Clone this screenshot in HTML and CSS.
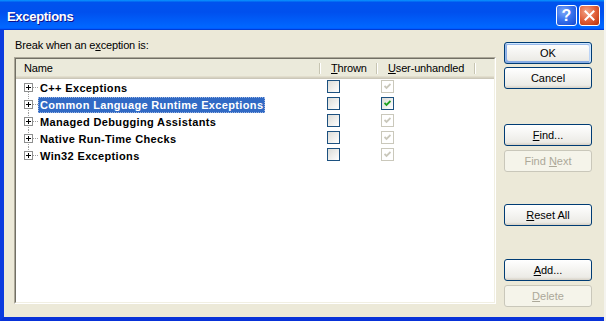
FILE: index.html
```html
<!DOCTYPE html>
<html lang="en">
<head>
    <meta charset="UTF-8">
    <title>Exceptions</title>
    <link rel="stylesheet" href="styles.css">
</head>
<body>
    <div class="window">
        <div class="titlebar">
            <span class="title">Exceptions</span>
            <button class="ctl help">?</button>
            <button class="ctl close">
                <svg width="11" height="11" viewBox="0 0 11 11"><path d="M1.5 1.5 L9.5 9.5 M9.5 1.5 L1.5 9.5" stroke="#fff" stroke-width="2" stroke-linecap="square"/></svg>
            </button>
        </div>

        <div class="client">
            <div class="main">
                <div class="prompt">Break when an e<u>x</u>ception is:</div>
                <div class="listbox">
                    <div class="listbox-in">
                        <div class="header">
                            <div class="hcol hname">Name</div>
                            <div class="hcol hthrown"><u>T</u>hrown</div>
                            <div class="hcol huser"><u>U</u>ser-unhandled</div>
                            <div class="hrest"></div>
                        </div>

                        <div class="rows">
                            <div class="row">
                                <div class="cell-name">
                                    <svg class="expander" width="9" height="9" viewBox="0 0 9 9"><rect x="0.5" y="0.5" width="8" height="8" fill="#fff" stroke="#8E8F8F"/><path d="M2 4.5 H7 M4.5 2 V7" stroke="#000"/></svg>
                                    <span class="branch"></span>
                                    <span class="label">C++ Exceptions</span>
                                </div>
                                <div class="cell-thrown"><span class="cb"></span></div>
                                <div class="cell-user"><span class="cb disabled"><svg width="7" height="7" viewBox="0 0 7 7"><path d="M0.5 3 L2.5 5 L6.5 1" stroke="#CAC8BB" stroke-width="1.8" fill="none"/></svg></span></div>
                            </div>
                            <div class="row selected">
                                <div class="cell-name">
                                    <svg class="expander" width="9" height="9" viewBox="0 0 9 9"><rect x="0.5" y="0.5" width="8" height="8" fill="#fff" stroke="#8E8F8F"/><path d="M2 4.5 H7 M4.5 2 V7" stroke="#000"/></svg>
                                    <span class="branch"></span>
                                    <span class="label">Common Language Runtime Exceptions</span>
                                </div>
                                <div class="cell-thrown"><span class="cb"></span></div>
                                <div class="cell-user"><span class="cb"><svg width="7" height="7" viewBox="0 0 7 7"><path d="M0.5 3 L2.5 5 L6.5 1" stroke="#21A121" stroke-width="1.8" fill="none"/></svg></span></div>
                            </div>
                            <div class="row">
                                <div class="cell-name">
                                    <svg class="expander" width="9" height="9" viewBox="0 0 9 9"><rect x="0.5" y="0.5" width="8" height="8" fill="#fff" stroke="#8E8F8F"/><path d="M2 4.5 H7 M4.5 2 V7" stroke="#000"/></svg>
                                    <span class="branch"></span>
                                    <span class="label">Managed Debugging Assistants</span>
                                </div>
                                <div class="cell-thrown"><span class="cb"></span></div>
                                <div class="cell-user"><span class="cb disabled"><svg width="7" height="7" viewBox="0 0 7 7"><path d="M0.5 3 L2.5 5 L6.5 1" stroke="#CAC8BB" stroke-width="1.8" fill="none"/></svg></span></div>
                            </div>
                            <div class="row">
                                <div class="cell-name">
                                    <svg class="expander" width="9" height="9" viewBox="0 0 9 9"><rect x="0.5" y="0.5" width="8" height="8" fill="#fff" stroke="#8E8F8F"/><path d="M2 4.5 H7 M4.5 2 V7" stroke="#000"/></svg>
                                    <span class="branch"></span>
                                    <span class="label">Native Run-Time Checks</span>
                                </div>
                                <div class="cell-thrown"><span class="cb"></span></div>
                                <div class="cell-user"><span class="cb disabled"><svg width="7" height="7" viewBox="0 0 7 7"><path d="M0.5 3 L2.5 5 L6.5 1" stroke="#CAC8BB" stroke-width="1.8" fill="none"/></svg></span></div>
                            </div>
                            <div class="row">
                                <div class="cell-name">
                                    <svg class="expander" width="9" height="9" viewBox="0 0 9 9"><rect x="0.5" y="0.5" width="8" height="8" fill="#fff" stroke="#8E8F8F"/><path d="M2 4.5 H7 M4.5 2 V7" stroke="#000"/></svg>
                                    <span class="branch"></span>
                                    <span class="label">Win32 Exceptions</span>
                                </div>
                                <div class="cell-thrown"><span class="cb"></span></div>
                                <div class="cell-user"><span class="cb disabled"><svg width="7" height="7" viewBox="0 0 7 7"><path d="M0.5 3 L2.5 5 L6.5 1" stroke="#CAC8BB" stroke-width="1.8" fill="none"/></svg></span></div>
                            </div>
                        </div>
                    </div>
                </div>
            </div>

            <div class="buttons">
                <button class="btn default">OK</button>
                <button class="btn">Cancel</button>
                <button class="btn find"><u>F</u>ind...</button>
                <button class="btn pair" disabled>Find <u>N</u>ext</button>
                <button class="btn reset"><u>R</u>eset All</button>
                <button class="btn add"><u>A</u>dd...</button>
                <button class="btn pair" disabled><u>D</u>elete</button>
            </div>
        </div>
    </div>
</body>
</html>
```

FILE: styles.css
```css
html, body {
    margin: 0;
    padding: 0;
}
body {
    width: 606px;
    height: 321px;
    overflow: hidden;
    background: #F4F3EE;
    font-family: "Liberation Sans", Arial, sans-serif;
    font-size: 11px;
    color: #000;
}
.window {
    width: 604px;
    height: 321px;
    display: flex;
    flex-direction: column;
}

/* title bar */
.titlebar {
    height: 30px;
    flex: none;
    display: flex;
    align-items: center;
    box-sizing: border-box;
    padding: 0 4px 0 7px;
    background: linear-gradient(180deg, #0997FF, #0053EE 8%, #0050EE 40%, #0066FF 88%, #0066FF 93%, #005BFF 95%, #003DD7 96%, #003DD7);
}
.title {
    flex: 1;
    color: #fff;
    font-weight: bold;
    font-size: 13px;
    letter-spacing: -0.3px;
    text-shadow: 1px 1px #0F1089;
    padding-top: 2px;
}
.ctl {
    width: 21px;
    height: 21px;
    box-sizing: border-box;
    border: 1px solid #fff;
    border-radius: 3px;
    padding: 0;
    display: flex;
    align-items: center;
    justify-content: center;
    color: #fff;
    font-family: "Liberation Sans", Arial, sans-serif;
    font-weight: bold;
    font-size: 16px;
    line-height: 19px;
}
.ctl + .ctl {
    margin-left: 2px;
}
.help {
    background: radial-gradient(circle at 35% 30%, #7DA8F8, #3A74EE 45%, #1A4FD6 90%);
}
.close {
    background: radial-gradient(circle at 35% 30%, #F2A486, #E1603A 50%, #C2380E 90%);
}

/* dialog body */
.client {
    flex: 1;
    display: flex;
    background: #ECE9D8;
    border-left: 4px solid #0B3BDF;
    border-bottom: 4px solid #0832D8;
    padding: 9px 0 0 10px;
}
.main {
    width: 482px;
}
.prompt {
    height: 13px;
    line-height: 13px;
    margin-bottom: 5px;
    padding-left: 1px;
    letter-spacing: -0.15px;
}
.listbox {
    height: 247px;
    box-sizing: border-box;
    border: 1px solid;
    border-color: #ACA899 #fff #fff #ACA899;
}
.listbox-in {
    height: 100%;
    box-sizing: border-box;
    border: 1px solid;
    border-color: #716F64 #F1EFE2 #F1EFE2 #716F64;
    background: #fff;
}

/* column header */
.header {
    display: flex;
    height: 20px;
    box-sizing: border-box;
    background: #EBEADB;
    box-shadow: inset 0 -1px #CBC7B8, inset 0 -2px #D6D2C2, inset 0 -3px #E2DECD;
}
.hcol {
    position: relative;
    box-sizing: border-box;
    line-height: 19px;
    letter-spacing: -0.15px;
    white-space: nowrap;
}
.hcol::after {
    content: "";
    position: absolute;
    right: 1px;
    top: 4px;
    bottom: 5px;
    width: 1px;
    background: #C7C5B2;
    box-shadow: 1px 0 #fff;
}
.hname {
    width: 305px;
    padding-left: 8px;
}
.hthrown {
    width: 57px;
    padding-left: 10px;
}
.huser {
    width: 98px;
    padding-left: 10px;
}
.hrest {
    flex: 1;
}

/* tree rows */
.row {
    display: flex;
    height: 17px;
}
.cell-name {
    position: relative;
    width: 305px;
    box-sizing: border-box;
    padding-left: 8px;
    display: flex;
    align-items: center;
}
.cell-name::before {
    content: "";
    position: absolute;
    left: 12px;
    top: 0;
    bottom: 0;
    width: 1px;
    background: repeating-linear-gradient(180deg, #A0A0A0 0 1px, transparent 1px 2px);
}
.row:first-child .cell-name::before {
    top: 9px;
}
.row:last-child .cell-name::before {
    bottom: 9px;
}
.expander {
    position: relative;
    flex: none;
    display: block;
}
.branch {
    width: 5px;
    height: 1px;
    flex: none;
    background: repeating-linear-gradient(90deg, #A0A0A0 0 1px, transparent 1px 2px);
}
.label {
    padding: 0 1px;
    border: 1px dotted transparent;
    line-height: 14px;
    font-weight: bold;
    letter-spacing: 0.35px;
    white-space: nowrap;
}
.selected .label {
    background: #316AC5;
    color: #fff;
    border-color: #9DB6E2;
}
.cell-thrown {
    width: 57px;
    box-sizing: border-box;
    padding: 1px 0 0 6px;
}
.cell-user {
    width: 98px;
    box-sizing: border-box;
    padding: 1px 0 0 3px;
}
.cb {
    width: 13px;
    height: 13px;
    box-sizing: border-box;
    border: 1px solid #1C5180;
    background: linear-gradient(135deg, #DCDCD7, #fff);
    display: flex;
    align-items: center;
    justify-content: center;
}
.cb.disabled {
    border-color: #CAC8BB;
    background: #fff;
}

/* buttons */
.buttons {
    width: 88px;
    margin-left: 8px;
    padding-top: 3px;
    display: flex;
    flex-direction: column;
}
.btn {
    height: 22px;
    box-sizing: border-box;
    border: 1px solid #003C74;
    border-radius: 3px;
    background: linear-gradient(180deg, #fff, #ECEBE6 86%, #D6D0C5);
    font-family: "Liberation Sans", Arial, sans-serif;
    font-size: 11px;
    color: #000;
    padding: 0;
}
.btn + .btn {
    margin-top: 3px;
}
.btn.default {
    box-shadow: inset -1px 1px #CEE7FF, inset 1px 2px #98B8EA, inset -2px 2px #BCD4F6, inset 1px -1px #89ADE4, inset 2px -2px #89ADE4;
}
.btn:disabled {
    border-color: #C9C7BA;
    background: #F5F4EA;
    color: #ACA899;
}
.btn.find {
    margin-top: 35px;
}
.btn.pair {
    margin-top: 4px;
}
.btn.reset {
    margin-top: 32px;
}
.btn.add {
    margin-top: 33px;
}
```
